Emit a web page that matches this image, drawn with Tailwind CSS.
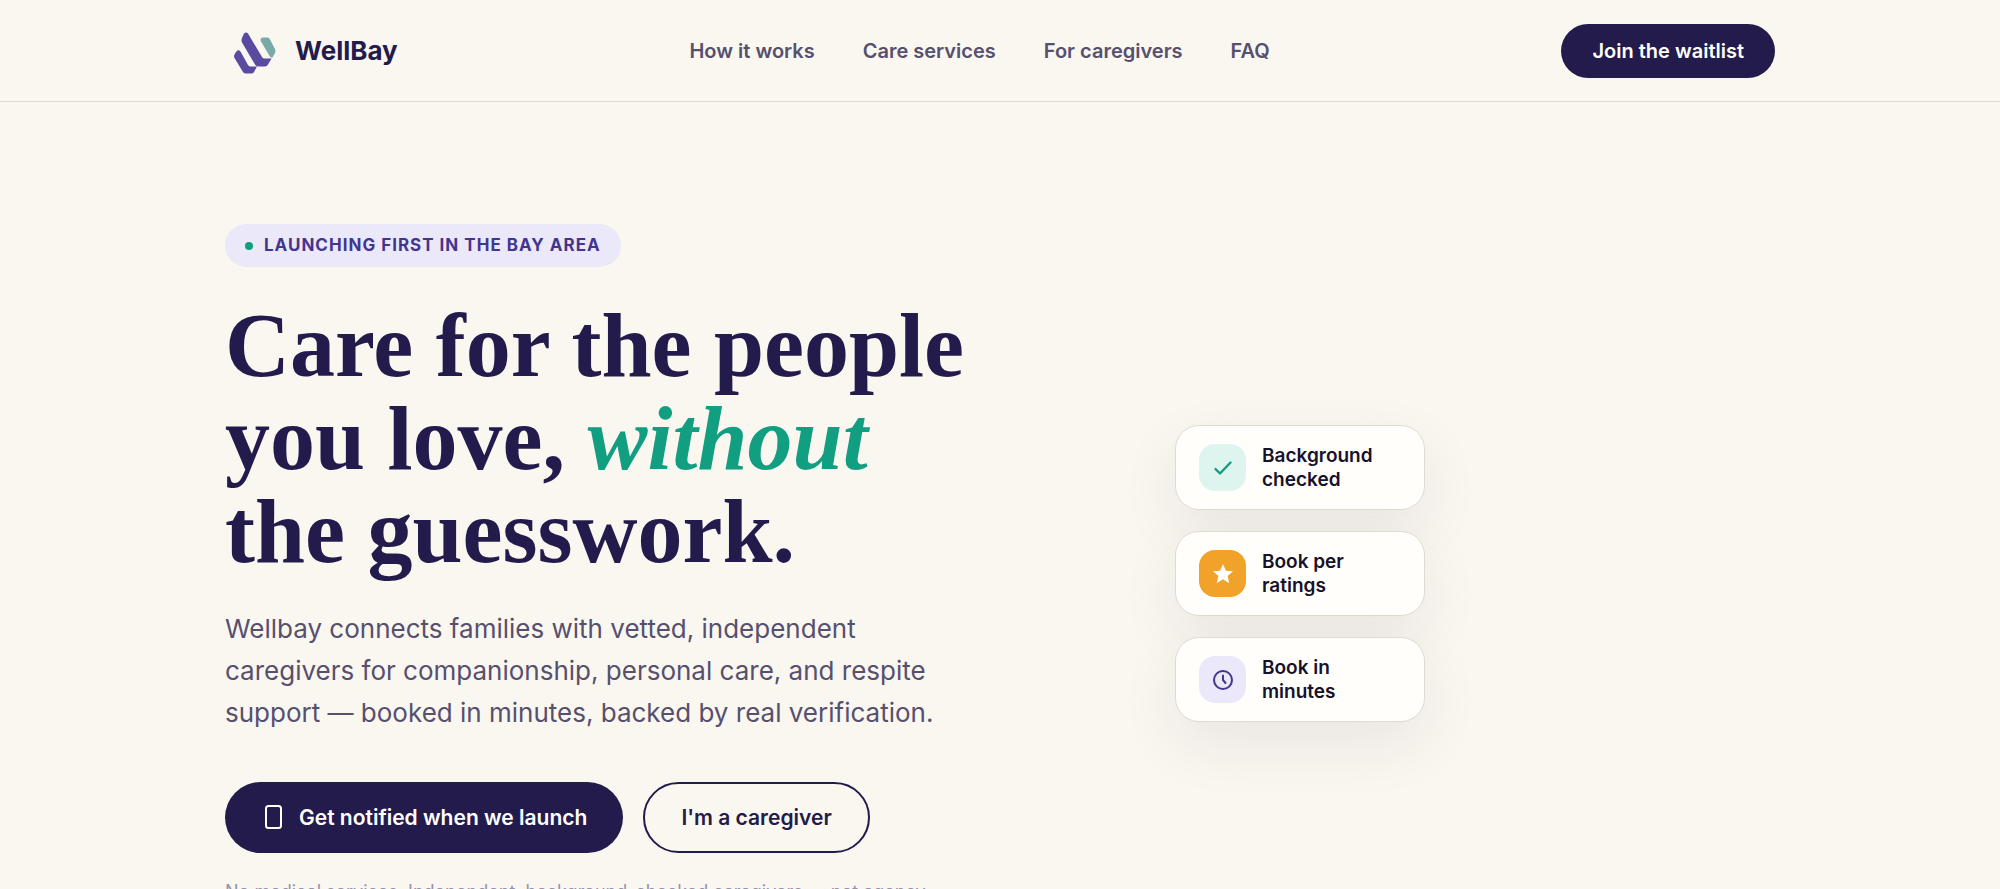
<!DOCTYPE html>
<html lang="en">
<head>
    <meta charset="UTF-8">
    <meta name="viewport" content="width=device-width, initial-scale=1.0">
    <title>WellBay</title>
    <script src="https://cdn.jsdelivr.net/npm/@tailwindcss/browser@4"></script>
</head>
<body class="bg-[#faf7f0] font-['Inter','Liberation_Sans',sans-serif] text-[#231b4b] antialiased overflow-x-hidden">

    <!-- Header -->
    <header class="border-b border-[#dfdad4]">
        <div class="max-w-[1598px] mx-auto px-6 h-[101px] flex items-center justify-between">
            <a href="#" class="flex items-center gap-4 pl-2">
                <svg class="w-[46px] h-[46px]" viewBox="0 0 46 46" fill="none">
                    <path d="M11 5.500Q13 3.500 15 5.500L29 29Q29.800 30.500 31.500 30.500H38.500L35 36.500Q34 38.500 32 38.500H25Q23 38.500 22 36.500L9 14.500Q8 12.500 9 10Z" fill="#5b4ba0"/>
                    <path d="M3 24Q5 21 7.500 23.500L15 37Q16 38.500 18 38.500H24L21 44Q20 45.500 18.500 45.500H13Q11 45.500 10 44L1.500 30Q.5 28.500 1.500 26.500Z" fill="#5b4ba0"/>
                    <path d="M27.500 12Q27.500 9.500 30 9.500H34.500Q36 9.500 37 11.500L42 21Q43 23 42 25L39.500 29.500H37.500L28 13.500Q27.500 12.800 27.500 12Z" fill="#7aaaa8"/>
                </svg>
                <span class="text-[26px] font-bold">WellBay</span>
            </a>
            <nav class="flex items-center gap-12 text-[20px] font-semibold text-[#56506e]">
                <a href="#how">How it works</a>
                <a href="#services">Care services</a>
                <a href="#caregivers">For caregivers</a>
                <a href="#faq">FAQ</a>
            </nav>
            <button class="h-[54px] px-[31px] rounded-full bg-[#231b4b] text-white text-[20px] font-semibold">Join the waitlist</button>
        </div>
    </header>

    <!-- Hero -->
    <main class="max-w-[1598px] mx-auto px-6 pt-[122px] pb-24 grid grid-cols-[767px_1fr] gap-[183px] items-center">
        <div>
            <div class="inline-flex items-center gap-[11px] h-[43px] px-5 rounded-full bg-[#ebe8fa] text-[#43358f] text-[17px] font-bold tracking-[1px] uppercase">
                <span class="w-2 h-2 rounded-full bg-[#129e80]"></span>
                Launching first in the Bay Area
            </div>
            <h1 class="mt-8 font-['Liberation_Serif',serif] font-bold text-[90px] leading-[93px]">
                Care for the people<br>
                you love, <em class="text-[#129e80]">without</em><br>
                the guesswork.
            </h1>
            <p class="mt-[30px] max-w-[740px] text-[26px] leading-[42px] text-[#56506e]">
                Wellbay connects families with vetted, independent caregivers for companionship, personal care, and respite support — booked in minutes, backed by real verification.
            </p>
            <div class="mt-12 flex gap-5">
                <button class="h-[71px] px-9 flex items-center gap-3 rounded-full bg-[#231b4b] text-white text-[21px] font-semibold">
                    <svg class="w-[26px] h-[26px]" viewBox="0 0 26 26" fill="none" stroke="currentColor" stroke-width="2">
                        <rect x="5" y="1" width="15" height="22" rx="2.500"/>
                    </svg>
                    Get notified when we launch
                </button>
                <button class="h-[71px] px-9 rounded-full border-2 border-[#231b4b] text-[21px] font-semibold">I'm a caregiver</button>
            </div>
            <p class="mt-7 text-[18px] leading-[21px] text-[#9891ac]">
                No medical services. Independent, background-checked caregivers — not agency employees.
            </p>
        </div>

        <!-- Trust cards -->
        <ul class="w-[250px] flex flex-col gap-[21px] text-[19px] leading-6 font-semibold text-[#17122b]">
            <li class="h-[85px] pl-[23px] flex items-center gap-4 rounded-3xl bg-[#fffefb] border border-[#e0dbd0] shadow-[0_22px_60px_rgba(35,27,75,0.08)]">
                <span class="w-[47px] h-[47px] rounded-2xl bg-[#def4ee] text-[#129e80] flex items-center justify-center">
                    <svg class="w-6 h-6" viewBox="0 0 24 24" fill="none" stroke="currentColor" stroke-width="2.400" stroke-linecap="round" stroke-linejoin="round">
                        <path d="M4.500 13l4.500 4.500L19.500 6.500"/>
                    </svg>
                </span>
                <span>Background<br>checked</span>
            </li>
            <li class="h-[85px] pl-[23px] flex items-center gap-4 rounded-3xl bg-[#fffefb] border border-[#e0dbd0] shadow-[0_22px_60px_rgba(35,27,75,0.08)]">
                <span class="w-[47px] h-[47px] rounded-2xl bg-[#f0a229] text-white flex items-center justify-center">
                    <svg class="w-6 h-6" viewBox="0 0 24 24" fill="currentColor">
                        <path d="M12 2l2.900 6.700 7.100.6-5.400 4.700 1.700 7.200L12 17.300 5.700 21.200l1.700-7.200L2 9.300l7.100-.6z"/>
                    </svg>
                </span>
                <span>Book per<br>ratings</span>
            </li>
            <li class="h-[85px] pl-[23px] flex items-center gap-4 rounded-3xl bg-[#fffefb] border border-[#e0dbd0] shadow-[0_22px_60px_rgba(35,27,75,0.08)]">
                <span class="w-[47px] h-[47px] rounded-2xl bg-[#ebe8fa] text-[#43358f] flex items-center justify-center">
                    <svg class="w-6 h-6" viewBox="0 0 24 24" fill="none" stroke="currentColor" stroke-width="2" stroke-linecap="round" stroke-linejoin="round">
                        <circle cx="12" cy="12" r="9"/>
                        <path d="M12 7.500V12l2.500 3"/>
                    </svg>
                </span>
                <span>Book in<br>minutes</span>
            </li>
        </ul>
    </main>

</body>
</html>
